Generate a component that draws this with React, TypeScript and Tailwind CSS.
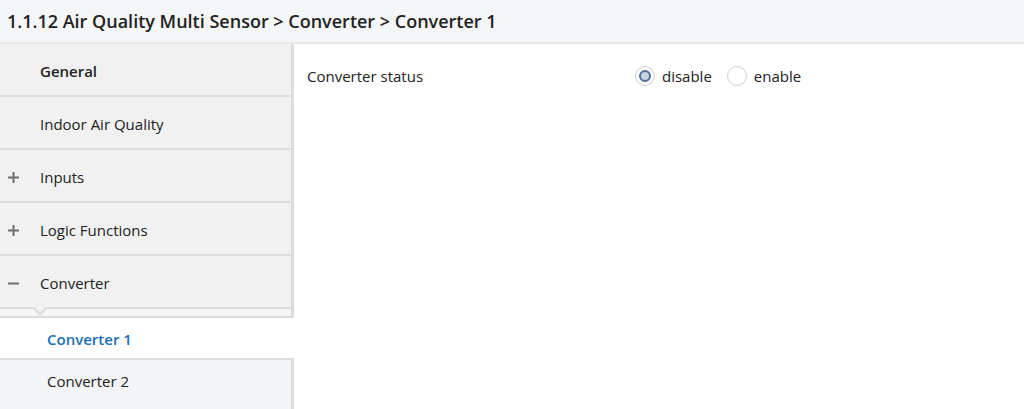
import { useState } from 'react';

type NavItem = { label: string; prefix?: '+' | '-'; bold?: boolean };

const ITEMS: NavItem[] = [
  { label: 'General', bold: true },
  { label: 'Indoor Air Quality' },
  { label: 'Inputs', prefix: '+' },
  { label: 'Logic Functions', prefix: '+' },
  { label: 'Converter', prefix: '-' },
];

function Radio({ checked, label, onClick }: { checked: boolean; label: string; onClick: () => void }) {
  return (
    <button onClick={onClick} className="flex items-center gap-[7px]">
      <span className="flex h-[20px] w-[20px] items-center justify-center rounded-full border border-[#cfcfcf] bg-white">
        {checked && <span className="h-[12px] w-[12px] rounded-full border-2 border-[#4d6f95] bg-[#c3d2e4]" />}
      </span>
      <span className="text-[15px] text-[#222]">{label}</span>
    </button>
  );
}

function Sign({ kind }: { kind: '+' | '-' }) {
  return (
    <svg width="11" height="11" viewBox="0 0 11 11" className="ml-[8px]">
      <rect x="0" y="4.5" width="11" height="2" fill="#6f6f6f" />
      {kind === '+' && <rect x="4.5" y="0" width="2" height="11" fill="#6f6f6f" />}
    </svg>
  );
}

export default function App() {
  const [status, setStatus] = useState<'disable' | 'enable'>('disable');

  return (
    <div className="flex h-[409px] w-[1024px] flex-col overflow-hidden bg-white font-['Open_Sans',sans-serif] text-[#222]">
      {/* Breadcrumb header */}
      <div className="flex h-[44px] shrink-0 items-center border-b-2 border-[#e6e7e8] bg-[#f5f6f7] pl-[7px]">
        <span className="text-[18px] font-semibold">
          1.1.12 Air Quality Multi Sensor &gt; Converter &gt; Converter 1
        </span>
      </div>

      <div className="flex flex-1">
        {/* Sidebar */}
        <div className="flex w-[294px] shrink-0 flex-col">
          {ITEMS.map((it) => (
            <div
              key={it.label}
              className="flex h-[53px] items-center border-r-[3px] border-b-2 border-[#dcdcdc] bg-[#f1f1f1] pt-[3px]"
            >
              <span className="flex w-[40px] items-center">{it.prefix && <Sign kind={it.prefix} />}</span>
              <span className={it.bold ? 'text-[15px] font-semibold' : 'text-[15px]'}>{it.label}</span>
            </div>
          ))}
          {/* submenu notch */}
          <div className="relative h-[9px] border-r-[3px] border-b-2 border-[#dcdcdc] bg-[#f4f5f6]">
            <div className="absolute left-[32px] top-[-1px] h-0 w-0 border-x-[8px] border-t-[8px] border-x-transparent border-t-[#dcdcdc]" />
            <div className="absolute left-[34px] top-[-2px] h-0 w-0 border-x-[6px] border-t-[6px] border-x-transparent border-t-[#f1f1f1]" />
          </div>
          <div className="flex h-[42px] items-center border-b-2 border-[#dcdcdc] bg-white pl-[47px] pt-[2px]">
            <span className="text-[15px] font-semibold text-[#1a6fb5]">Converter 1</span>
          </div>
          <div className="flex flex-1 items-center border-r-[3px] border-[#dcdcdc] bg-[#f3f4f6] pb-[6px] pl-[47px]">
            <span className="text-[15px]">Converter 2</span>
          </div>
        </div>

        {/* Content */}
        <div className="flex-1 pt-[21px] pl-[13px]">
          <div className="flex items-center">
            <span className="w-[328px] text-[15px]">Converter status</span>
            <div className="flex items-center gap-[15px]">
              <Radio checked={status === 'disable'} label="disable" onClick={() => setStatus('disable')} />
              <Radio checked={status === 'enable'} label="enable" onClick={() => setStatus('enable')} />
            </div>
          </div>
        </div>
      </div>
    </div>
  );
}
